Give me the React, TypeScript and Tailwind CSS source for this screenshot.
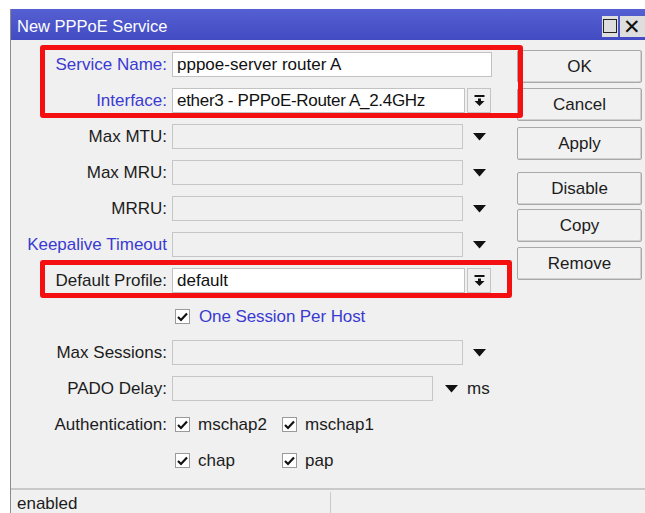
import React from "react";

const font = { fontFamily: '"Liberation Sans", Arial, sans-serif' };

function DropArrow() {
  return (
    <svg width="13" height="8" viewBox="0 0 13 8">
      <polygon points="0,0 13,0 6.5,7.5" fill="#111" />
    </svg>
  );
}

function ComboButton() {
  return (
    <div className="ml-[2px] flex h-[25px] w-[24px] items-center justify-center border border-[#c4c4c4] bg-[#f0f0f0]">
      <svg width="11" height="13" viewBox="0 0 11 13">
        <rect x="0.5" y="1" width="10" height="2" fill="#111" />
        <rect x="4" y="4.5" width="3" height="3" fill="#111" />
        <polygon points="0.5,7 10.5,7 5.5,12" fill="#111" />
      </svg>
    </div>
  );
}

function Check() {
  return (
    <div className="flex h-[15px] w-[15px] items-center justify-center border border-[#9a9a9a] bg-white">
      <svg width="11" height="10" viewBox="0 0 11 10">
        <path d="M1 5 L4 8 L10 1.5" stroke="#111" strokeWidth="2.2" fill="none" />
      </svg>
    </div>
  );
}

function Label({ text, blue }: { text: string; blue?: boolean }) {
  return (
    <div
      className={`w-[156px] shrink-0 whitespace-nowrap text-right text-[17px] leading-none ${
        blue ? "text-[#3a3ad2]" : "text-[#1c1c1c]"
      }`}
    >
      {text}
    </div>
  );
}

function Row({ children }: { children: React.ReactNode }) {
  return <div className="flex h-[25px] items-center gap-[5px]">{children}</div>;
}

function EmptyField({ width }: { width: string }) {
  return <div className={`h-[25px] ${width} border border-[#c6c6c6] bg-[#f0f0f0]`} />;
}

function Btn({ label, mt }: { label: string; mt: string }) {
  return (
    <div
      className={`${mt} flex h-[33px] w-[125px] items-center justify-center rounded-[2px] border border-[#a9a9a9] bg-[#f1f1f1] text-[17px] text-[#1c1c1c] shadow-[inset_-1px_-1px_0_#d0d0d0]`}
    >
      {label}
    </div>
  );
}

export default function App() {
  return (
    <div className="relative h-[513px] w-[645px] overflow-hidden bg-white" style={font}>
      <div className="ml-[10px] mt-[9px] flex h-[504px] flex-col border-l border-[#8c8c8c]">
        {/* title bar */}
        <div className="flex h-[31px] items-center bg-gradient-to-b from-[#5560d2] to-[#434bc2] pl-[6px]">
          <span className="pt-[3px] text-[16.5px] text-white">New PPPoE Service</span>
          <div className="ml-auto mt-[3px] flex h-[21px] items-center gap-[2px]">
            <div className="flex h-[21px] w-[16px] items-center justify-center bg-[#dedede]">
              <div className="h-[14px] w-[14px] border-[1.5px] border-[#222]" />
            </div>
            <div className="flex h-[21px] w-[25px] items-center justify-start bg-[#dedede] pl-[3px] text-[21px] leading-none text-[#111]">
              ✕
            </div>
          </div>
        </div>

        {/* body */}
        <div className="flex flex-1 bg-[#f0f0f0]">
          <div className="flex flex-col gap-[11px] pt-[12px]">
            <Row>
              <Label text="Service Name:" blue />
              <div className="flex h-[25px] w-[320px] items-center border border-[#c2c2c2] bg-white pl-[4px] text-[17px] text-[#111]">
                pppoe-server router A
              </div>
            </Row>
            <Row>
              <Label text="Interface:" blue />
              <div className="flex">
                <div className="flex h-[25px] w-[293px] items-center border border-[#c2c2c2] bg-white pl-[4px] text-[17px] tracking-[-0.3px] text-[#111]">
                  ether3 - PPPoE-Router A_2.4GHz
                </div>
                <ComboButton />
              </div>
            </Row>
            {["Max MTU:", "Max MRU:", "MRRU:"].map((t) => (
              <Row key={t}>
                <Label text={t} />
                <EmptyField width="w-[291px]" />
                <div className="ml-[5px]">
                  <DropArrow />
                </div>
              </Row>
            ))}
            <Row>
              <Label text="Keepalive Timeout" blue />
              <EmptyField width="w-[291px]" />
              <div className="ml-[5px]">
                <DropArrow />
              </div>
            </Row>
            <Row>
              <Label text="Default Profile:" />
              <div className="flex">
                <div className="flex h-[25px] w-[293px] items-center border border-[#c2c2c2] bg-white pl-[4px] text-[17px] text-[#111]">
                  default
                </div>
                <ComboButton />
              </div>
            </Row>
            <Row>
              <div className="w-[156px] shrink-0" />
              <div className="ml-[3px] flex items-center gap-[9px]">
                <Check />
                <span className="text-[17px] tracking-[-0.1px] text-[#3a3ad2]">One Session Per Host</span>
              </div>
            </Row>
            <Row>
              <Label text="Max Sessions:" />
              <EmptyField width="w-[291px]" />
              <div className="ml-[5px]">
                <DropArrow />
              </div>
            </Row>
            <Row>
              <Label text="PADO Delay:" />
              <EmptyField width="w-[261px]" />
              <div className="ml-[7px]">
                <DropArrow />
              </div>
              <span className="ml-[4px] text-[17px] text-[#1c1c1c]">ms</span>
            </Row>
            <Row>
              <Label text="Authentication:" />
              <div className="ml-[3px] flex items-center">
                <div className="flex w-[107px] items-center gap-[8px]">
                  <Check />
                  <span className="text-[17px] text-[#1c1c1c]">mschap2</span>
                </div>
                <div className="flex items-center gap-[8px]">
                  <Check />
                  <span className="text-[17px] text-[#1c1c1c]">mschap1</span>
                </div>
              </div>
            </Row>
            <Row>
              <div className="w-[156px] shrink-0" />
              <div className="ml-[3px] flex items-center">
                <div className="flex w-[107px] items-center gap-[8px]">
                  <Check />
                  <span className="text-[17px] text-[#1c1c1c]">chap</span>
                </div>
                <div className="flex items-center gap-[8px]">
                  <Check />
                  <span className="text-[17px] text-[#1c1c1c]">pap</span>
                </div>
              </div>
            </Row>
          </div>

          {/* action buttons */}
          <div className="ml-auto mr-[3px] flex flex-col">
            <Btn label="OK" mt="mt-[10px]" />
            <Btn label="Cancel" mt="mt-[5px]" />
            <Btn label="Apply" mt="mt-[6px]" />
            <Btn label="Disable" mt="mt-[12px]" />
            <Btn label="Copy" mt="mt-[4px]" />
            <Btn label="Remove" mt="mt-[5px]" />
          </div>
        </div>

        {/* status bar */}
        <div className="flex h-[25px] border-t-2 border-[#c9c9c9] bg-[#f0f0f0]">
          <div className="flex w-[319px] items-center pl-[6px] pt-[4px] text-[17px] text-[#1c1c1c]">enabled</div>
          <div className="mt-[2px] w-px bg-[#c9c9c9]" />
          <div className="flex-1" />
        </div>
      </div>

      {/* highlight frames */}
      <div className="absolute left-[40px] top-[45px] h-[73px] w-[483px] rounded-[3px] border-[5px] border-[#f41010]" />
      <div className="absolute left-[40px] top-[260px] h-[38px] w-[472px] rounded-[3px] border-[5px] border-[#f41010]" />
    </div>
  );
}
